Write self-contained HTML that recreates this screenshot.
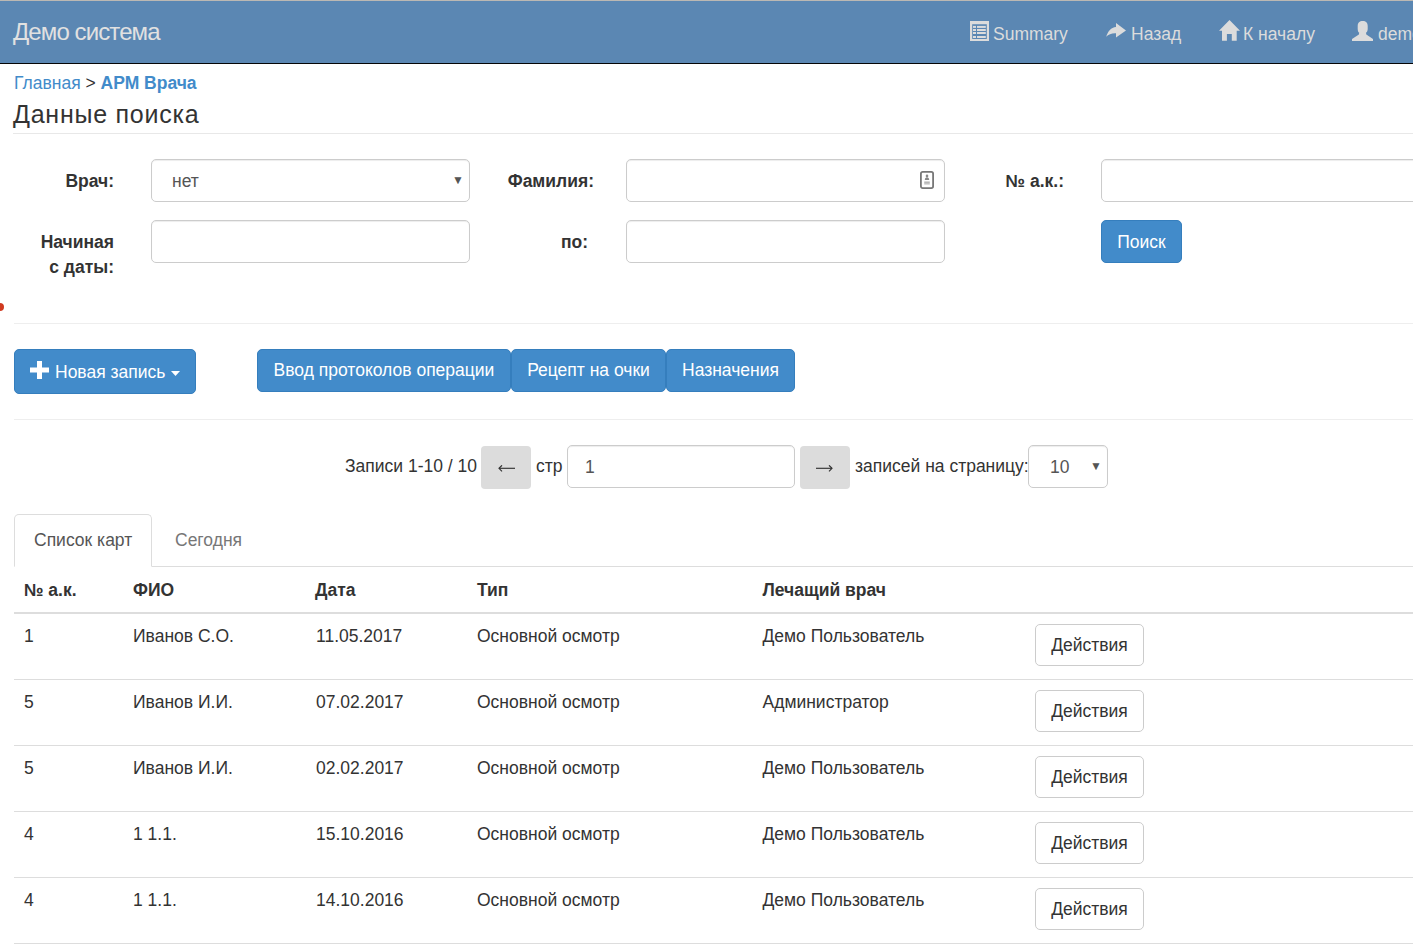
<!DOCTYPE html>
<html><head><meta charset="utf-8">
<style>
*{box-sizing:border-box;margin:0;padding:0}
html,body{width:1413px;height:951px;overflow:hidden;background:#fff}
body{font-family:"Liberation Sans",sans-serif;font-size:17.5px;line-height:25px;color:#333;position:relative}
.a{position:absolute;white-space:nowrap}
#topline{left:0;top:0;width:1413px;height:1px;background:#bcb8b3}
#nav{left:0;top:1px;width:1413px;height:62px;background:#5b87b3}
#navb{left:0;top:63px;width:1413px;height:1px;background:#060606}
.brand{font-size:22.5px;color:#e1e1e1}
.nt{color:#dcdcdc}
.crumb{color:#428bca}
.hr{height:1px;background:#eee}
.lbl{font-weight:bold;text-align:right}
.inp{border:1px solid #ccc;border-radius:5px;background:#fff;box-shadow:inset 0 1px 1px rgba(0,0,0,.075)}
.btnp{background:#428bca;border:1px solid #357ebd;border-radius:5px;color:#fff;text-align:center}
.btng{background:#dcdcdc;border-radius:4px}
.btnd{background:#fff;border:1px solid #ccc;border-radius:5px;color:#333;text-align:center}
.th{font-weight:bold}
.rb{height:1px;background:#ddd;left:14px;width:1399px}
.row{left:0;width:1413px;height:66px}
</style></head><body>
<div class="a" id="topline"></div>
<div class="a" id="nav"></div>
<div class="a" id="navb"></div>
<div class="a brand" style="left:13px;top:19px;font-size:24px;letter-spacing:-0.9px">Демо система</div>

<!-- nav items -->
<svg class="a" style="left:970px;top:21px" width="19" height="20" viewBox="0 0 19 20"><path d="M0 0H19V20H0Z M2.2 3.3V18H16.8V3.3Z" fill="#dcdcdc" fill-rule="evenodd"/><g fill="#dcdcdc"><rect x="3" y="4.9" width="3" height="2"/><rect x="7" y="4.9" width="8.8" height="2"/><rect x="3" y="8" width="3" height="2"/><rect x="7" y="8" width="8.8" height="2"/><rect x="3" y="11" width="3" height="2"/><rect x="7" y="11" width="8.8" height="2"/><rect x="3" y="15" width="3" height="2"/><rect x="7" y="15" width="8.8" height="2"/></g></svg>
<div class="a nt" style="left:993px;top:22px">Summary</div>
<svg class="a" style="left:1105px;top:22px" width="22" height="17" viewBox="0 0 22 17"><path d="M11 1 L21 8.5 L11 15.6 L11 11.3 C7 11 3.5 12.5 1.2 14.8 C3 9 6 5.5 11 5 Z" fill="#dcdcdc"/></svg>
<div class="a nt" style="left:1131px;top:22px">Назад</div>
<svg class="a" style="left:1219px;top:20px" width="21" height="21" viewBox="0 0 21 21"><path d="M10.5 0 L21 10.8 L17.7 10.8 L17.7 20.7 L12.8 20.7 L12.8 13.9 L7.9 13.9 L7.9 20.7 L3 20.7 L3 10.8 L0 10.8 Z" fill="#dcdcdc"/></svg>
<div class="a nt" style="left:1243px;top:22px">К началу</div>
<svg class="a" style="left:1352px;top:21px" width="21" height="20" viewBox="0 0 21 20"><path d="M5.7 5 C5.7 1.5 7.5 0 10.7 0 C13.9 0 15.7 1.5 15.7 5 L15.7 8 C15.7 10 14.8 11.3 14 11.8 L14.3 13.6 L21 18 L21 20 L0 20 L0 18 L6.9 13.6 L7.2 11.8 C6.4 11.3 5.7 10 5.7 8 Z" fill="#dcdcdc"/></svg>
<div class="a nt" style="left:1378px;top:22px">demo</div>

<!-- breadcrumb -->
<div class="a" style="left:14px;top:71px"><span class="crumb">Главная</span> &gt; <b class="crumb">АРМ Врача</b></div>
<div class="a" style="left:13px;top:99px;font-size:25px;line-height:30px;letter-spacing:0.75px">Данные поиска</div>
<div class="a hr" style="left:13px;top:133px;width:1400px;background:#e8e8e8"></div>

<!-- form -->
<div class="a lbl" style="left:14px;top:169px;width:100px">Врач:</div>
<div class="a inp" style="left:151px;top:159px;width:319px;height:43px"></div>
<div class="a" style="left:172px;top:169px;color:#555">нет</div>
<div class="a" style="left:452px;top:168px;font-size:12px;color:#555">▼</div>

<div class="a lbl" style="left:480px;top:169px;width:114px">Фамилия:</div>
<div class="a inp" style="left:626px;top:159px;width:319px;height:43px"></div>
<svg class="a" style="left:920px;top:171px" width="14" height="18" viewBox="0 0 14 18"><rect x="0.9" y="0.9" width="12.2" height="16.2" rx="1.8" fill="none" stroke="#777" stroke-width="1.8"/><circle cx="7" cy="4.9" r="1.3" fill="#888"/><path d="M4.8 9 C4.8 7 5.8 6.2 7 6.2 C8.2 6.2 9.2 7 9.2 9 Z" fill="#888"/><rect x="4.2" y="10.6" width="5.6" height="1.1" fill="#999"/><rect x="4.2" y="12.3" width="5.6" height="1.1" fill="#aaa"/></svg>

<div class="a lbl" style="left:960px;top:169px;width:104px">№ а.к.:</div>
<div class="a inp" style="left:1101px;top:159px;width:330px;height:43px"></div>

<div class="a lbl" style="left:14px;top:230px;width:100px">Начиная<br>с даты:</div>
<div class="a inp" style="left:151px;top:220px;width:319px;height:43px"></div>
<div class="a lbl" style="left:480px;top:230px;width:108px">по:</div>
<div class="a inp" style="left:626px;top:220px;width:319px;height:43px"></div>
<div class="a btnp" style="left:1101px;top:220px;width:81px;height:43px;line-height:42px">Поиск</div>

<div class="a" style="left:-4px;top:303px;width:8px;height:8px;border-radius:50%;background:#d03a20"></div>
<div class="a hr" style="left:14px;top:323px;width:1399px"></div>

<!-- buttons -->
<div class="a btnp" style="left:14px;top:349px;width:182px;height:45px"></div>
<svg class="a" style="left:30px;top:361px" width="19" height="18" viewBox="0 0 19 18"><path d="M7 0 H12 V6.5 H19 V11.5 H12 V18 H7 V11.5 H0 V6.5 H7 Z" fill="#fff"/></svg>
<div class="a" style="left:55px;top:360px;color:#fff">Новая запись</div>
<svg class="a" style="left:171px;top:371px" width="9" height="5" viewBox="0 0 9 5"><path d="M0 0 H9 L4.5 5 Z" fill="#fff"/></svg>

<div class="a btnp" style="left:257px;top:349px;width:254px;height:43px;line-height:41px">Ввод протоколов операции</div>
<div class="a btnp" style="left:511px;top:349px;width:155px;height:43px;line-height:41px">Рецепт на очки</div>
<div class="a btnp" style="left:666px;top:349px;width:129px;height:43px;line-height:41px">Назначения</div>

<div class="a hr" style="left:14px;top:419px;width:1399px"></div>

<!-- pagination -->
<div class="a" style="left:345px;top:454px">Записи 1-10 / 10</div>
<div class="a btng" style="left:481px;top:446px;width:50px;height:43px"></div>
<svg class="a" style="left:498px;top:465px" width="18" height="7" viewBox="0 0 18 7"><path d="M1 3.3 H17" stroke="#333" stroke-width="1.15"/><path d="M4 0.3 L1 3.3 L4 6.3" fill="none" stroke="#333" stroke-width="1.15"/></svg>
<div class="a" style="left:536px;top:454px">стр</div>
<div class="a inp" style="left:567px;top:445px;width:228px;height:43px"></div>
<div class="a" style="left:585px;top:455px;color:#555">1</div>
<div class="a btng" style="left:800px;top:446px;width:50px;height:43px"></div>
<svg class="a" style="left:816px;top:465px" width="18" height="7" viewBox="0 0 18 7"><path d="M0 3.3 H16" stroke="#333" stroke-width="1.15"/><path d="M13 0.3 L16 3.3 L13 6.3" fill="none" stroke="#333" stroke-width="1.15"/></svg>
<div class="a" style="left:855px;top:454px">записей на страницу:</div>
<div class="a inp" style="left:1028px;top:445px;width:80px;height:43px"></div>
<div class="a" style="left:1050px;top:455px;color:#555">10</div>
<div class="a" style="left:1090px;top:454px;font-size:12px;color:#555">▼</div>

<!-- tabs -->
<div class="a" style="left:14px;top:566px;width:1399px;height:1px;background:#ddd"></div>
<div class="a" style="left:14px;top:514px;width:138px;height:53px;border:1px solid #ddd;border-bottom-color:#fff;border-radius:5px 5px 0 0;background:#fff"></div>
<div class="a" style="left:34px;top:528px;color:#555">Список карт</div>
<div class="a" style="left:175px;top:528px;color:#777">Сегодня</div>

<!-- table -->
<div class="a th" style="left:24px;top:578px">№ а.к.</div>
<div class="a th" style="left:133px;top:578px">ФИО</div>
<div class="a th" style="left:315px;top:578px">Дата</div>
<div class="a th" style="left:477px;top:578px">Тип</div>
<div class="a th" style="left:762.5px;top:578px">Лечащий врач</div>
<div class="a" style="left:14px;top:612px;width:1399px;height:2px;background:#ddd"></div>

<div class="a row" style="top:614px"><div class="a" style="left:24px;top:10px">1</div><div class="a" style="left:133px;top:10px">Иванов С.О.</div><div class="a" style="left:316px;top:10px">11.05.2017</div><div class="a" style="left:477px;top:10px">Основной осмотр</div><div class="a" style="left:762.5px;top:10px">Демо Пользователь</div><div class="a btnd" style="left:1035px;top:10px;width:109px;height:42px;line-height:40px">Действия</div><div class="a rb" style="top:65px"></div></div>
<div class="a row" style="top:680px"><div class="a" style="left:24px;top:10px">5</div><div class="a" style="left:133px;top:10px">Иванов И.И.</div><div class="a" style="left:316px;top:10px">07.02.2017</div><div class="a" style="left:477px;top:10px">Основной осмотр</div><div class="a" style="left:762.5px;top:10px">Администратор</div><div class="a btnd" style="left:1035px;top:10px;width:109px;height:42px;line-height:40px">Действия</div><div class="a rb" style="top:65px"></div></div>
<div class="a row" style="top:746px"><div class="a" style="left:24px;top:10px">5</div><div class="a" style="left:133px;top:10px">Иванов И.И.</div><div class="a" style="left:316px;top:10px">02.02.2017</div><div class="a" style="left:477px;top:10px">Основной осмотр</div><div class="a" style="left:762.5px;top:10px">Демо Пользователь</div><div class="a btnd" style="left:1035px;top:10px;width:109px;height:42px;line-height:40px">Действия</div><div class="a rb" style="top:65px"></div></div>
<div class="a row" style="top:812px"><div class="a" style="left:24px;top:10px">4</div><div class="a" style="left:133px;top:10px">1 1.1.</div><div class="a" style="left:316px;top:10px">15.10.2016</div><div class="a" style="left:477px;top:10px">Основной осмотр</div><div class="a" style="left:762.5px;top:10px">Демо Пользователь</div><div class="a btnd" style="left:1035px;top:10px;width:109px;height:42px;line-height:40px">Действия</div><div class="a rb" style="top:65px"></div></div>
<div class="a row" style="top:878px"><div class="a" style="left:24px;top:10px">4</div><div class="a" style="left:133px;top:10px">1 1.1.</div><div class="a" style="left:316px;top:10px">14.10.2016</div><div class="a" style="left:477px;top:10px">Основной осмотр</div><div class="a" style="left:762.5px;top:10px">Демо Пользователь</div><div class="a btnd" style="left:1035px;top:10px;width:109px;height:42px;line-height:40px">Действия</div><div class="a rb" style="top:65px"></div></div>

</body></html>
